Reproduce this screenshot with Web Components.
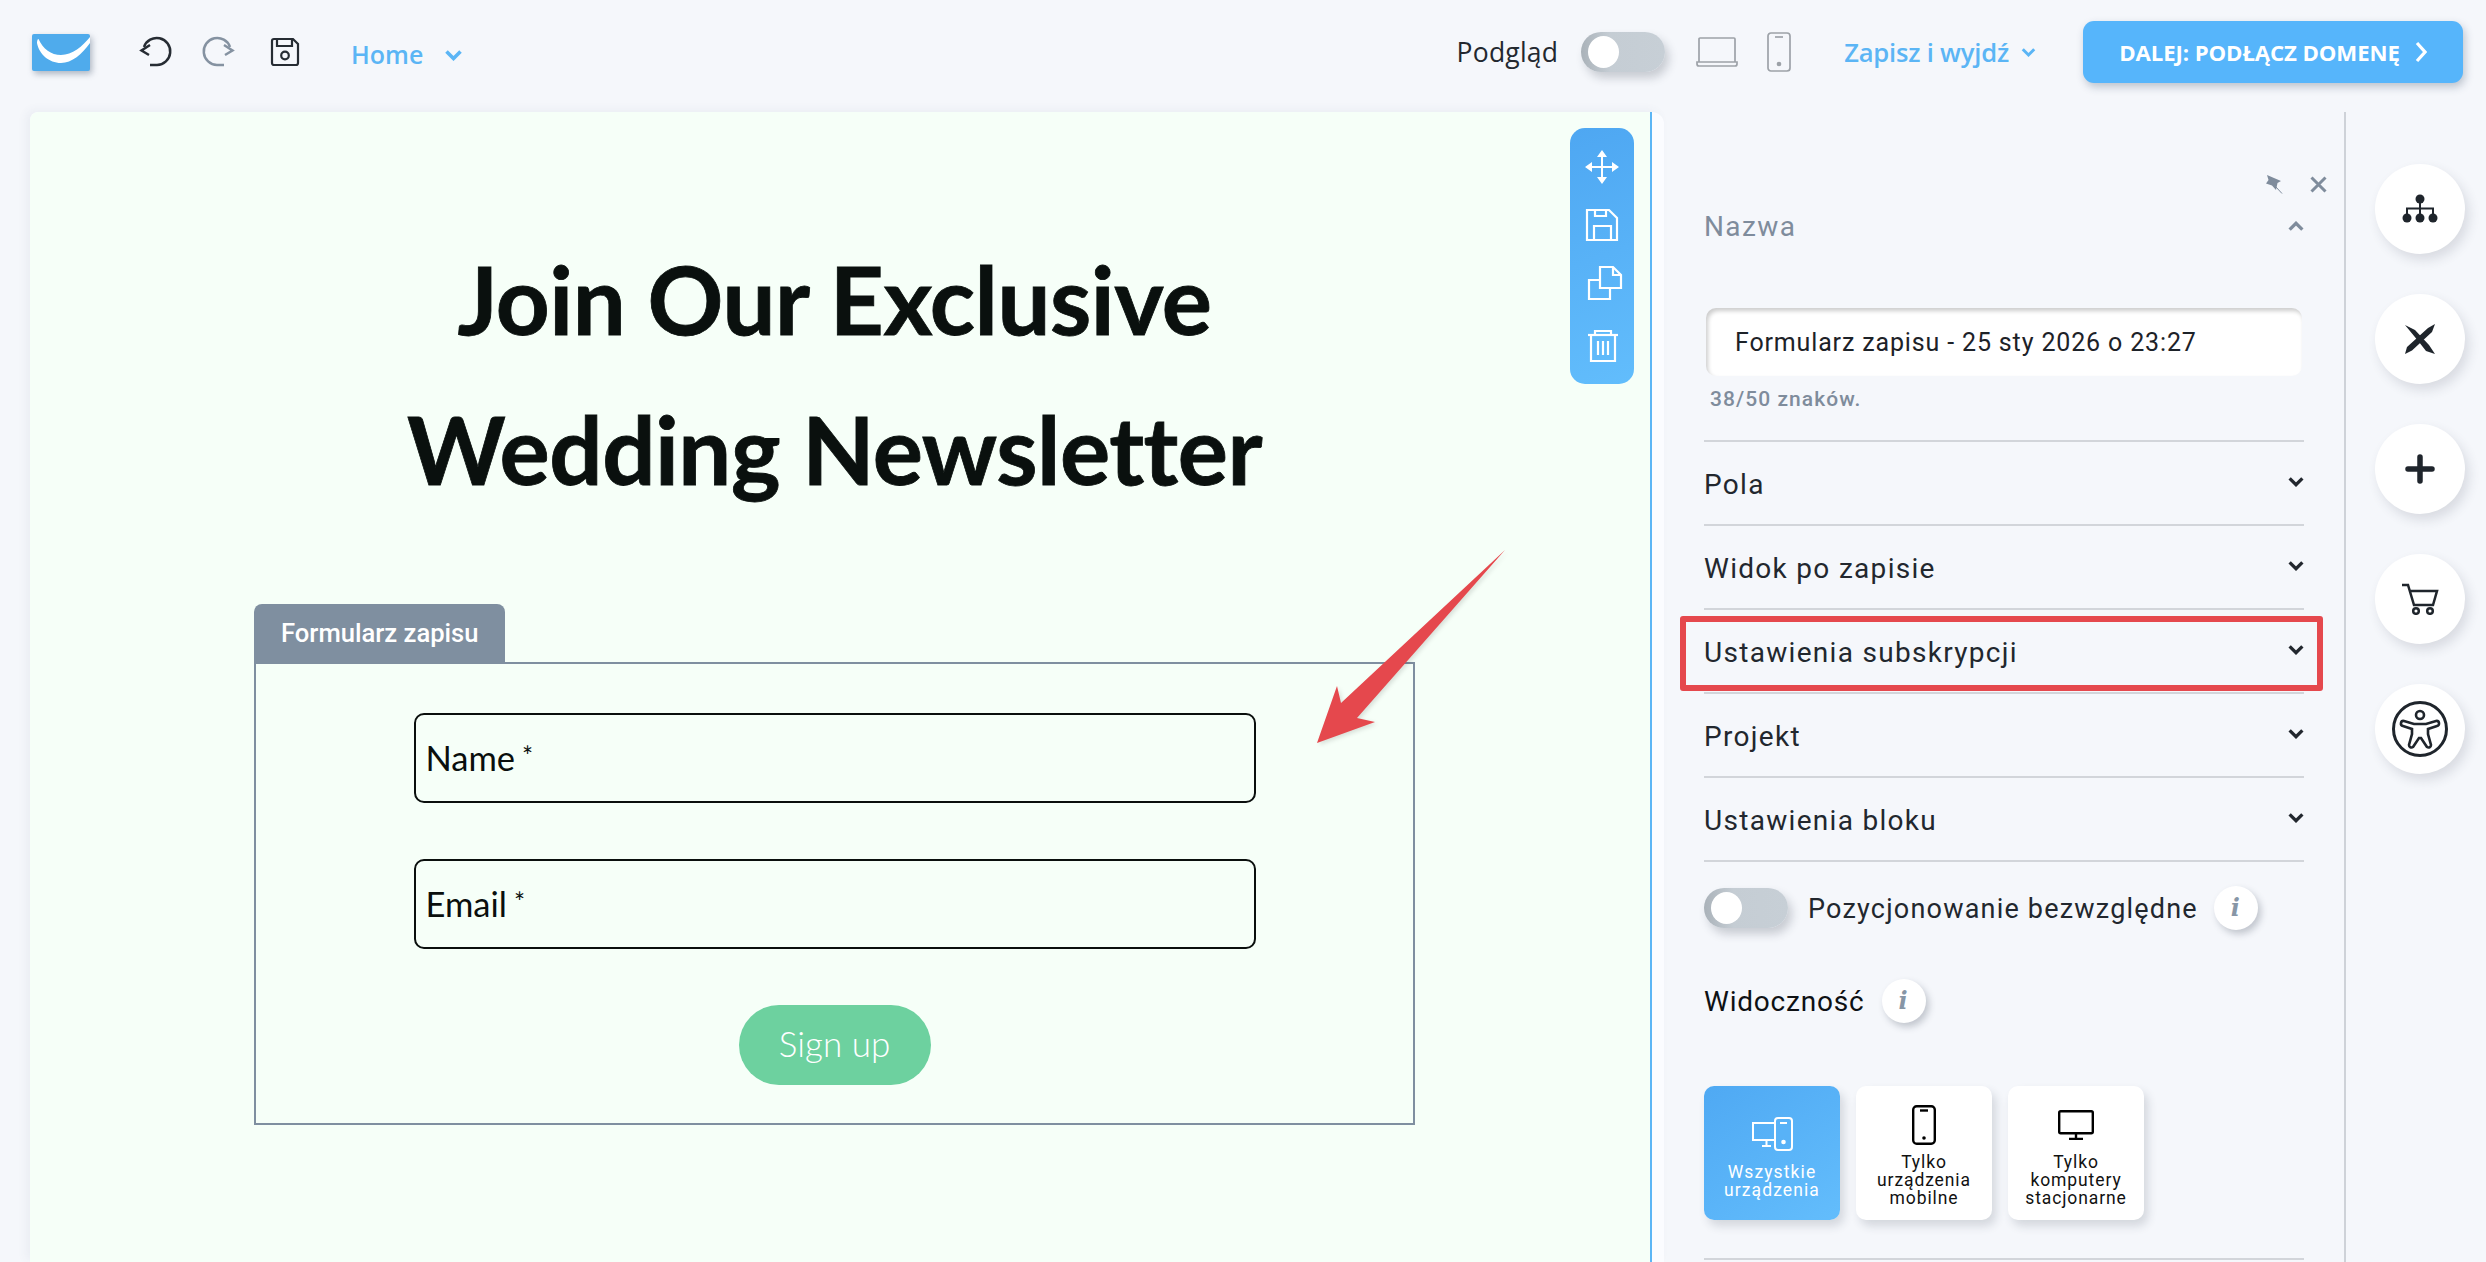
<!DOCTYPE html>
<html lang="pl"><head><meta charset="utf-8"><title>Formularz</title>
<style>
html,body{margin:0;height:100%;background:#f5f7fb;overflow:hidden;font-family:Roboto,"Liberation Sans",sans-serif}
</style></head>
<body>
<editor-app>
  <top-bar slot="top"></top-bar>
  <form-canvas slot="canvas"></form-canvas>
  <side-panel slot="panel"></side-panel>
  <tool-rail slot="rail"></tool-rail>
</editor-app>
<script>
const def=(name,html)=>customElements.define(name,class extends HTMLElement{
  constructor(){super();this.attachShadow({mode:'open'}).innerHTML=html}
});
const chev=(c,w=17,up=false)=>`<svg width="${w}" height="${Math.round(w*.62)}" viewBox="0 0 17 11" fill="none" stroke="${c}" stroke-width="3.600" style="display:block"><path d="${up?'M1.500 9.500 8.500 2.500 15.500 9.500':'M1.500 1.500 8.500 8.500 15.500 1.500'}"/></svg>`;

def('editor-app',`<style>
:host{display:grid;grid-template-columns:30px 1634px 682px 1fr;grid-template-rows:112px 1150px;height:1262px;overflow:hidden}
.top{grid-column:1/5}.c{grid-column:2}.p{grid-column:3}.r{grid-column:4}
</style>
<div class="top"><slot name="top"></slot></div>
<div class="c"><slot name="canvas"></slot></div>
<div class="p"><slot name="panel"></slot></div>
<div class="r"><slot name="rail"></slot></div>`);

def('toggle-switch',`<style>
:host{display:block;width:84px;height:40px;border-radius:20px;background:linear-gradient(90deg,#aab2b9,#c5cdd4 35%,#c7cfd6);box-shadow:4px 6px 10px rgba(40,50,70,.22);position:relative;flex:none}
i{position:absolute;left:7px;top:4px;width:31px;height:32px;border-radius:50%;background:#fff}
</style><i></i>`);

def('info-dot',`<style>
:host{display:flex;align-items:center;justify-content:center;width:44px;height:44px;border-radius:50%;background:#fff;box-shadow:3px 4px 7px rgba(40,50,70,.25);flex:none;
font:italic 700 24px "DejaVu Serif","Liberation Serif",serif;color:#8796a6;line-height:1}
</style><slot>i</slot>`);

def('top-bar',`<style>
:host{display:flex;align-items:center;height:112px;font-family:"Open Sans","Noto Sans",sans-serif;padding-bottom:8px;box-sizing:border-box}
.logo{margin-left:32px;width:58px;height:37px;flex:none;filter:drop-shadow(2px 3px 3px rgba(40,60,90,.35))}
svg{display:block;flex:none}
.undo{margin-left:48px}.redo{margin-left:26px}.save{margin-left:34px}
.home{margin-left:51px;font-size:25px;font-weight:600;color:#5bb5f5;width:94px;position:relative;top:2px}
.hc{position:relative;top:3px}
.right{margin-left:auto;display:flex;align-items:center;padding-right:23px}
.prev{font-size:26.500px;font-weight:500;color:#23282f;letter-spacing:.2px;margin-right:23px}
.lap{margin-left:31px}.ph{margin-left:29px}
.save-exit{margin-left:53px;font-size:25.600px;font-weight:600;color:#5bb5f5;letter-spacing:-.2px}
.ch2{margin-left:12px}
.cta{margin-left:47px;width:380px;height:62px;background:#56b5fb;border-radius:11px;color:#fff;font-weight:700;font-size:22.200px;display:flex;align-items:center;justify-content:center;gap:15px;box-shadow:2px 4px 8px rgba(40,60,90,.28);letter-spacing:-.1px}
</style>
<svg class="logo" viewBox="0 0 58 37"><rect width="58" height="37" rx="2" fill="#4fabec"/><path fill="#fff" d="M6.500 5C11 15 19 21 29 21 40 21 51 12 58 3V9C50 20 40 29 29 29 17 29 7 20 5 9 5 7 5.500 5 6.500 5Z"/></svg>
<svg class="undo" width="36" height="36" viewBox="0 0 36 36" fill="none" stroke="#262c33" stroke-width="2.500"><path d="M12 31H19A13.500 13.500 0 1 0 6 13"/><path d="M12 11 3.500 16.500 11 21"/></svg>
<svg class="redo" width="36" height="36" viewBox="0 0 36 36" fill="none" stroke="#8592a1" stroke-width="2.500"><path d="M24 31H17A13.500 13.500 0 1 1 30 13"/><path d="M24 11 32.500 16.500 25 21"/></svg>
<svg class="save" width="30" height="30" viewBox="0 0 30 30" fill="none" stroke="#262c33" stroke-width="2.200"><path d="M4 2H23L28 7V26A2 2 0 0 1 26 28H4A2 2 0 0 1 2 26V4A2 2 0 0 1 4 2Z"/><path d="M7 2V9H22V2"/><circle cx="15" cy="18.500" r="3.800"/></svg>
<span class="home">Home</span><span class="hc">${chev('#5bb5f5',17)}</span>
<div class="right">
<span class="prev">Podgląd</span><toggle-switch></toggle-switch>
<svg class="lap" width="42" height="30" viewBox="0 0 42 30" fill="none" stroke="#9da2a8" stroke-width="1.700"><path d="M3 25V2A1 1 0 0 1 4 1H38A1 1 0 0 1 39 2V25"/><path d="M1 25H41V27A2 2 0 0 1 39 29H3A2 2 0 0 1 1 27Z"/></svg>
<svg class="ph" width="24" height="40" viewBox="0 0 24 40" fill="none" stroke="#9da2a8" stroke-width="1.700"><rect x="1" y="1" width="22" height="38" rx="3"/><path d="M8 5H16"/><circle cx="12" cy="32" r="1.500" fill="#9da2a8"/></svg>
<span class="save-exit">Zapisz i wyjdź</span><span class="ch2">${chev('#5bb5f5',15)}</span>
<div class="cta"><span>DALEJ: PODŁĄCZ DOMENĘ</span><svg width="12" height="22" viewBox="0 0 12 22" fill="none" stroke="#fff" stroke-width="3.200"><path d="M2 2 10 11 2 20"/></svg></div>
</div>`);

def('float-tools',`<style>
:host{position:absolute;left:1540px;top:16px;width:64px;height:256px;border-radius:15px;background:linear-gradient(160deg,#4ea7f2,#62bdfc);display:flex;flex-direction:column;align-items:center;gap:18px;padding-top:19px;box-sizing:border-box}
svg{display:block;flex:none}
</style>
<svg width="40" height="40" viewBox="0 0 40 40" fill="none" stroke="#fff" stroke-width="2"><path d="M20 7V33M7 20H33"/><path fill="#fff" stroke="none" d="M20 3 25 10H15ZM20 37 15 30H25ZM3 20 10 15V25ZM37 20 30 25V15Z"/></svg>
<svg width="40" height="40" viewBox="0 0 40 40" fill="none" stroke="#fff" stroke-width="2.200"><path d="M5 5H27L35 13V35H5Z"/><path d="M13 5V11H24V5"/><path d="M12 35V21H29V35"/></svg>
<svg width="40" height="40" viewBox="0 0 40 40" fill="none" stroke="#fff" stroke-width="2.200" style="transform:translateX(2px)"><path d="M16 4H29L37 12V25H16Z"/><path d="M29 4V12H37"/><path d="M16 17H5V36H26V25"/></svg>
<svg width="40" height="40" viewBox="0 0 40 40" fill="none" stroke="#fff" stroke-width="2.200" style="margin-top:5px;transform:translateX(1px)"><path d="M5 9H35"/><path d="M12 9V5H28V9"/><path d="M8 9V35H32V9"/><path d="M15 15V29M20 15V29M25 15V29"/></svg>`);

def('form-field',`<style>
:host{display:flex;align-items:center;width:842px;height:90px;box-sizing:border-box;border:2.500px solid #0a0f0d;border-radius:10px;padding:0 0 2px 10px;color:#0a0f0d;font:400 34.500px Lato,"Liberation Sans",sans-serif;}
sup{font-size:26px;line-height:0;position:relative;top:-1px;vertical-align:super;margin-left:7px}
</style><slot></slot><sup>*</sup>`);

def('form-canvas',`<style>
:host{display:block;position:relative;height:1150px;background:#fbfcff;border-radius:8px 12px 0 0;box-shadow:-4px -2px 10px rgba(60,80,120,.06);overflow:hidden}
.green{width:1622px;height:100%;box-sizing:border-box;background:#f6fff8;border-right:2px solid #5cb6f5;border-radius:8px 0 0 0;padding:112px 0 0 224px}
.block{width:1161px}
h1{margin:0;text-align:center;font:700 94px/150px Lato,"Liberation Sans",sans-serif;color:#0a100e;letter-spacing:-.5px;-webkit-text-stroke:.8px #0a100e}
.tab{margin-top:80px;width:251px;height:59px;background:#7f8fa0;border-radius:8px 8px 0 0;color:#fff;font:500 25.600px Roboto,sans-serif;display:flex;align-items:center;padding:0 0 2px 27px;box-sizing:border-box}
.box{margin-top:-1px;height:463px;box-sizing:border-box;border:2px solid #7f8fa0;padding-top:49px;display:flex;flex-direction:column;align-items:center;gap:56px}
.btn{width:192px;height:80px;border-radius:40px;background:#6dd19f;color:#fff;font:300 35px Lato,sans-serif;display:flex;align-items:center;justify-content:center;padding-bottom:4px;box-sizing:border-box}
.arrow{position:absolute;left:1250px;top:428px;filter:drop-shadow(2px 2px 2px rgba(0,0,0,.12))}
</style>
<div class="green"><div class="block">
<h1>Join Our Exclusive<br>Wedding Newsletter</h1>
<div class="tab">Formularz zapisu</div>
<div class="box"><form-field>Name</form-field><form-field>Email</form-field><div class="btn">Sign up</div></div>
</div></div>
<float-tools></float-tools>
<svg class="arrow" width="240" height="210" viewBox="0 0 240 210"><path fill="#e5484d" d="M37 203 57 146 61 163 225 10 77 178 95 182Z"/></svg>`);

def('acc-row',`<style>
:host{display:flex;align-items:center;justify-content:space-between;height:84px;box-sizing:border-box;border-bottom:2px solid #d2d5da;color:#22272e;font-size:28px;letter-spacing:1.300px;position:relative;padding-top:2px}
:host([highlight])::after{content:"";position:absolute;left:-24px;right:-19px;top:6px;bottom:1px;border:6px solid #e5484d;border-radius:3px;box-sizing:border-box}
div{margin-bottom:4px}
</style><slot></slot><div>${chev('#22272e',16)}</div>`);

def('device-card',`<style>
:host{display:flex;flex-direction:column;align-items:center;width:136px;height:134px;box-sizing:border-box;background:#fff;border-radius:10px;box-shadow:4px 6px 10px rgba(40,50,70,.16);color:#111;font-size:17.500px;line-height:18px;letter-spacing:.9px;text-align:center;padding-top:16px}
:host([active]){background:linear-gradient(145deg,#4fa9f3,#63bdfc);color:#fff;padding-top:30px;letter-spacing:1.100px}
.i{height:45px;display:flex;align-items:center;justify-content:center;margin-bottom:0}
:host([active]) .i{height:35px;margin-bottom:6px}
.t{margin-top:6px}
</style><div class="i"><slot name="icon"></slot></div><div class="t"><slot></slot></div>`);

def('side-panel',`<style>
:host{display:block;height:1150px;box-sizing:border-box;border-right:2px solid #ced2d8;padding:63px 40px 0 40px;position:relative}
.icons{display:flex;justify-content:flex-end;gap:27px;height:19px;margin-right:-23px;align-items:center}
.name{display:flex;align-items:center;justify-content:space-between;height:64px;color:#7f8c9c;font-size:28px;letter-spacing:1.400px}
.inp{margin-top:50px;height:68px;box-sizing:border-box;background:#fff;border-radius:10px;box-shadow:inset 2px 3px 4px rgba(0,0,0,.2);padding-left:29px;display:flex;align-items:center;font-size:25px;letter-spacing:.85px;color:#1d2228;margin-left:2px;margin-right:2px}
.cnt{margin-top:11px;height:24px;line-height:24px;margin-left:6px;color:#7f8c9c;font-size:21px;font-weight:500;letter-spacing:1.050px}
.rows{margin-top:29px;border-top:2px solid #d2d5da}
.abs{margin-top:26px;height:40px;display:flex;align-items:center;font-size:27px;letter-spacing:1.200px;color:#22272e}
.abs span{margin-left:20px;margin-right:16px;padding-top:2px}
.vis{margin-top:51px;height:44px;display:flex;align-items:center;font-size:28px;letter-spacing:.8px;color:#0e1114;gap:17px}
.cards{margin-top:63px;display:flex;gap:16px}
hr{margin:38px 0 0;border:0;height:2px;background:#d2d5da}
</style>
<div class="icons">
<svg width="19" height="19" viewBox="0 0 19 19" fill="#7f8c9c"><path d="M3 0 10 3 17 6 13.500 8 12 15 8 10.500 2 8.500 4.500 5Z"/><path d="M12 12 18 18.500" stroke="#7f8c9c" stroke-width="1" fill="none"/></svg>
<svg width="17" height="17" viewBox="0 0 17 17" fill="none" stroke="#7f8c9c" stroke-width="3"><path d="M1.500 1.500 15.500 15.500M15.500 1.500 1.500 15.500"/></svg>
</div>
<div class="name"><span>Nazwa</span>${chev('#7f8c9c',16,true)}</div>
<div class="inp">Formularz zapisu - 25 sty 2026 o 23:27</div>
<div class="cnt">38/50 znaków.</div>
<div class="rows">
<acc-row>Pola</acc-row><acc-row>Widok po zapisie</acc-row><acc-row highlight>Ustawienia subskrypcji</acc-row><acc-row>Projekt</acc-row><acc-row>Ustawienia bloku</acc-row>
</div>
<div class="abs"><toggle-switch></toggle-switch><span>Pozycjonowanie bezwzględne</span><info-dot></info-dot></div>
<div class="vis"><span>Widoczność</span><info-dot></info-dot></div>
<div class="cards">
<device-card active><svg slot="icon" width="42" height="34" viewBox="0 0 42 34" fill="none" stroke="#fff" stroke-width="2"><path d="M28 23H2V6H28"/><path d="M11 29H20M15.500 23V29"/><rect x="24" y="1" width="17" height="32" rx="3" fill="#58b2f7"/><path d="M29 6H36"/><circle cx="32.500" cy="25" r="1.300" fill="#fff"/></svg>Wszystkie<br>urządzenia</device-card>
<device-card><svg slot="icon" width="24" height="40" viewBox="0 0 24 40" fill="none" stroke="#000" stroke-width="2.400"><rect x="1.200" y="1.200" width="21.600" height="37.600" rx="3.500"/><path d="M8 5.500H16"/><circle cx="12" cy="33" r="1.800" fill="#000" stroke="none"/></svg>Tylko<br>urządzenia<br>mobilne</device-card>
<device-card><svg slot="icon" width="36" height="30" viewBox="0 0 36 30" fill="none" stroke="#000" stroke-width="2.400"><rect x="1.200" y="1.200" width="33.600" height="22" rx="1.500"/><path d="M18 23V29M11 29H25"/></svg>Tylko<br>komputery<br>stacjonarne</device-card>
</div>
<hr>`);

def('round-btn',`<style>
:host{display:flex;align-items:center;justify-content:center;width:90px;height:90px;border-radius:50%;background:#fff;box-shadow:4px 6px 12px rgba(40,50,70,.14);flex:none}
</style><slot></slot>`);

def('tool-rail',`<style>
:host{display:flex;flex-direction:column;gap:40px;padding:52px 0 0 29px}
</style>
<round-btn><svg width="36" height="30" viewBox="0 0 36 30" fill="#1f252c" stroke="none"><circle cx="18" cy="5" r="4.500"/><circle cx="5" cy="24" r="4.500"/><circle cx="18" cy="24" r="4.500"/><circle cx="31" cy="24" r="4.500"/><path fill="none" stroke="#1f252c" stroke-width="2" d="M18 8V22M5 22V14.500H31V22"/></svg></round-btn>
<round-btn><svg width="32" height="32" viewBox="0 0 32 32" fill="#1f252c"><path d="M1 31 3 24 24 5 31 1 28 9 8 27.500ZM1 2 11 7 25 22 31 31 22 28 15 19Z"/></svg></round-btn>
<round-btn><svg width="30" height="30" viewBox="0 0 30 30" fill="none" stroke="#1f252c" stroke-width="5.500" stroke-linecap="round"><path d="M15 3V27M3 15H27"/></svg></round-btn>
<round-btn><svg width="38" height="32" viewBox="0 0 38 32" fill="none" stroke="#1f252c" stroke-width="2.500"><path d="M1 2H7L13 22H32L36 8H9"/><circle cx="15" cy="28" r="2.800"/><circle cx="29" cy="28" r="2.800"/></svg></round-btn>
<round-btn><svg width="58" height="58" viewBox="0 0 58 58" fill="none" stroke="#1f252c" stroke-width="3"><circle cx="29" cy="29" r="26.500"/><circle cx="29" cy="15" r="4" stroke-width="2.600"/><path stroke-width="2.600" d="M13 21 23 24H35L45 21A2.500 2.500 0 0 1 46 26L37 29V34L40 45A2.500 2.500 0 0 1 36 47L30 38H28L22 47A2.500 2.500 0 0 1 18 45L21 34V29L12 26A2.500 2.500 0 0 1 13 21Z"/></svg></round-btn>`);
</script>
</body></html>
